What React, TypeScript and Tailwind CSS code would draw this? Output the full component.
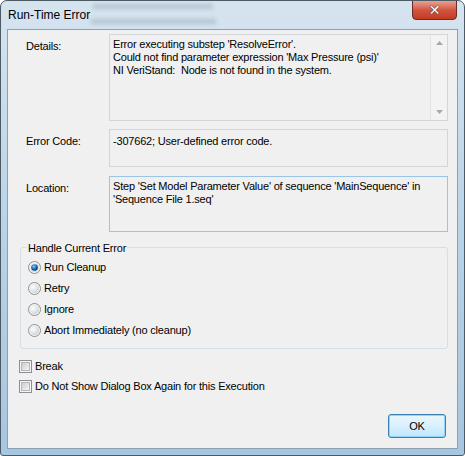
import React from "react";

const font = { fontFamily: '"Liberation Sans", Arial, sans-serif' };

const Radio = ({ checked }: { checked?: boolean }) => (
  <svg width="13" height="13" viewBox="0 0 13 13" className="shrink-0">
    <defs>
      <radialGradient id={checked ? "rg1" : "rg0"} cx="0.35" cy="0.35" r="0.7">
        <stop offset="0" stopColor="#ffffff" />
        <stop offset="1" stopColor="#cfd3d8" />
      </radialGradient>
      <radialGradient id="dot" cx="0.4" cy="0.35" r="0.6">
        <stop offset="0" stopColor="#8fd1ff" />
        <stop offset="0.6" stopColor="#1f6fb8" />
        <stop offset="1" stopColor="#0b3f7a" />
      </radialGradient>
    </defs>
    <circle cx="6.5" cy="6.5" r="6" fill="#f4f4f4" stroke="#8e8f8f" strokeWidth="1" />
    <circle cx="6.5" cy="6.5" r="4.5" fill={`url(#${checked ? "rg1" : "rg0"})`} />
    {checked && <circle cx="6.5" cy="6.5" r="3.3" fill="url(#dot)" />}
  </svg>
);

const Check = () => (
  <div className="w-[13px] h-[13px] border border-[#8f8f8f] bg-[#f4f4f4] p-[1px] shrink-0">
    <div className="w-full h-full bg-gradient-to-br from-[#c9cdd3] to-[#f4f4f4] border border-[#b3b8be]" />
  </div>
);

const App = () => {
  return (
    <div
      className="w-[465px] h-[456px] relative rounded-t-[7px] rounded-b-[3px] border border-[#4c5a66] bg-gradient-to-b from-[#d6e4ef] via-[#b9d3e7] to-[#a7c6df] overflow-hidden text-[11px] tracking-[-0.2px] text-black"
      style={font}
    >
      {/* title bar */}
      <div className="h-[28px] flex items-center pl-[7px] relative">
        <span className="text-[12px] tracking-normal text-black">Run-Time Error</span>
        <div className="absolute left-[90px] top-[3px] w-[130px] opacity-30 blur-[2px] flex flex-col gap-[10px]">
          <div className="h-[5px] w-[120px] ml-[2px] bg-[#6d7f90]" />
          <div className="h-[5px] w-[125px] bg-[#6d7f90]" />
        </div>
        <div className="absolute right-[7px] top-[-1px] w-[45px] h-[20px] rounded-b-[4px] border border-[#6b2b26] bg-gradient-to-b from-[#e8a293] via-[#d2553f] to-[#c23a22] flex items-center justify-center">
          <span
            className="text-white font-bold text-[14px] leading-none"
            style={{ fontFamily: '"DejaVu Sans", sans-serif', textShadow: "0 0 1px #333, 0 0 1px #333" }}
          >
            ✕
          </span>
        </div>
      </div>

      {/* client */}
      <div className="mx-[6px] h-[420px] border border-[#8aa0b3] bg-[#f0f0f0] pl-[12px] pr-[9px] pt-[4px] relative">
        <div className="flex">
          <div className="w-[89px] pl-[6px] pt-[4px]">Details:</div>
          <div className="flex-1 h-[87px] border border-[#d1d6db] flex">
            <div className="flex-1 pl-[3px] pt-[3px] leading-[13px]">
              <div>Error executing substep 'ResolveError'.</div>
              <div>Could not find parameter expression 'Max Pressure (psi)'</div>
              <div>NI VeriStand:&nbsp; Node is not found in the system.</div>
            </div>
            <div className="w-[17px] border-l border-[#e3e3e3] bg-[#f3f3f3] flex flex-col items-center justify-between py-[6px]">
              <svg width="7" height="4"><path d="M0 4 L3.5 0 L7 4 Z" fill="#a8a8a8" /></svg>
              <svg width="7" height="4"><path d="M0 0 L3.5 4 L7 0 Z" fill="#a8a8a8" /></svg>
            </div>
          </div>
        </div>

        <div className="flex mt-[8px]">
          <div className="w-[89px] pl-[6px] pt-[4px]">Error Code:</div>
          <div className="flex-1 h-[38px] border border-[#d1d6db] pl-[3px] pt-[3px]">
            -307662; User-defined error code.
          </div>
        </div>

        <div className="flex mt-[9px]">
          <div className="w-[89px] pl-[6px] pt-[4px]">Location:</div>
          <div className="flex-1 h-[56px] border border-[#9cc4e4] pl-[3px] pt-[3px] leading-[13px]">
            <div>Step 'Set Model Parameter Value' of sequence 'MainSequence' in</div>
            <div>'Sequence File 1.seq'</div>
          </div>
        </div>

        <div className="mt-[15px] h-[102px] border border-[#d5dfe5] rounded-[3px] relative pl-[7px] pt-[13px]">
          <span className="absolute left-[6px] top-[-8px] bg-[#f0f0f0] px-[1px]">Handle Current Error</span>
          <div className="flex flex-col gap-[8px]">
            {[
              ["Run Cleanup", true],
              ["Retry", false],
              ["Ignore", false],
              ["Abort Immediately (no cleanup)", false],
            ].map(([label, on]) => (
              <div key={label as string} className="flex items-center gap-[3px] h-[13px]">
                <Radio checked={on as boolean} />
                <span>{label as string}</span>
              </div>
            ))}
          </div>
        </div>

        <div className="flex items-center gap-[3px] mt-[11px] h-[13px] -ml-[1px]">
          <Check />
          <span>Break</span>
        </div>
        <div className="flex items-center gap-[3px] mt-[7px] h-[13px] -ml-[1px]">
          <Check />
          <span>Do Not Show Dialog Box Again for this Execution</span>
        </div>

        <div className="flex justify-end mt-[21px] pr-[2px]">
          <div className="w-[58px] h-[24px] rounded-[3px] border border-[#3c7fb1] bg-gradient-to-b from-[#eaf6fd] via-[#d9f0fc] to-[#bee6fd] shadow-[inset_0_0_0_1px_#92d4f7] flex items-center justify-center">
            OK
          </div>
        </div>
      </div>
    </div>
  );
};

export default App;
